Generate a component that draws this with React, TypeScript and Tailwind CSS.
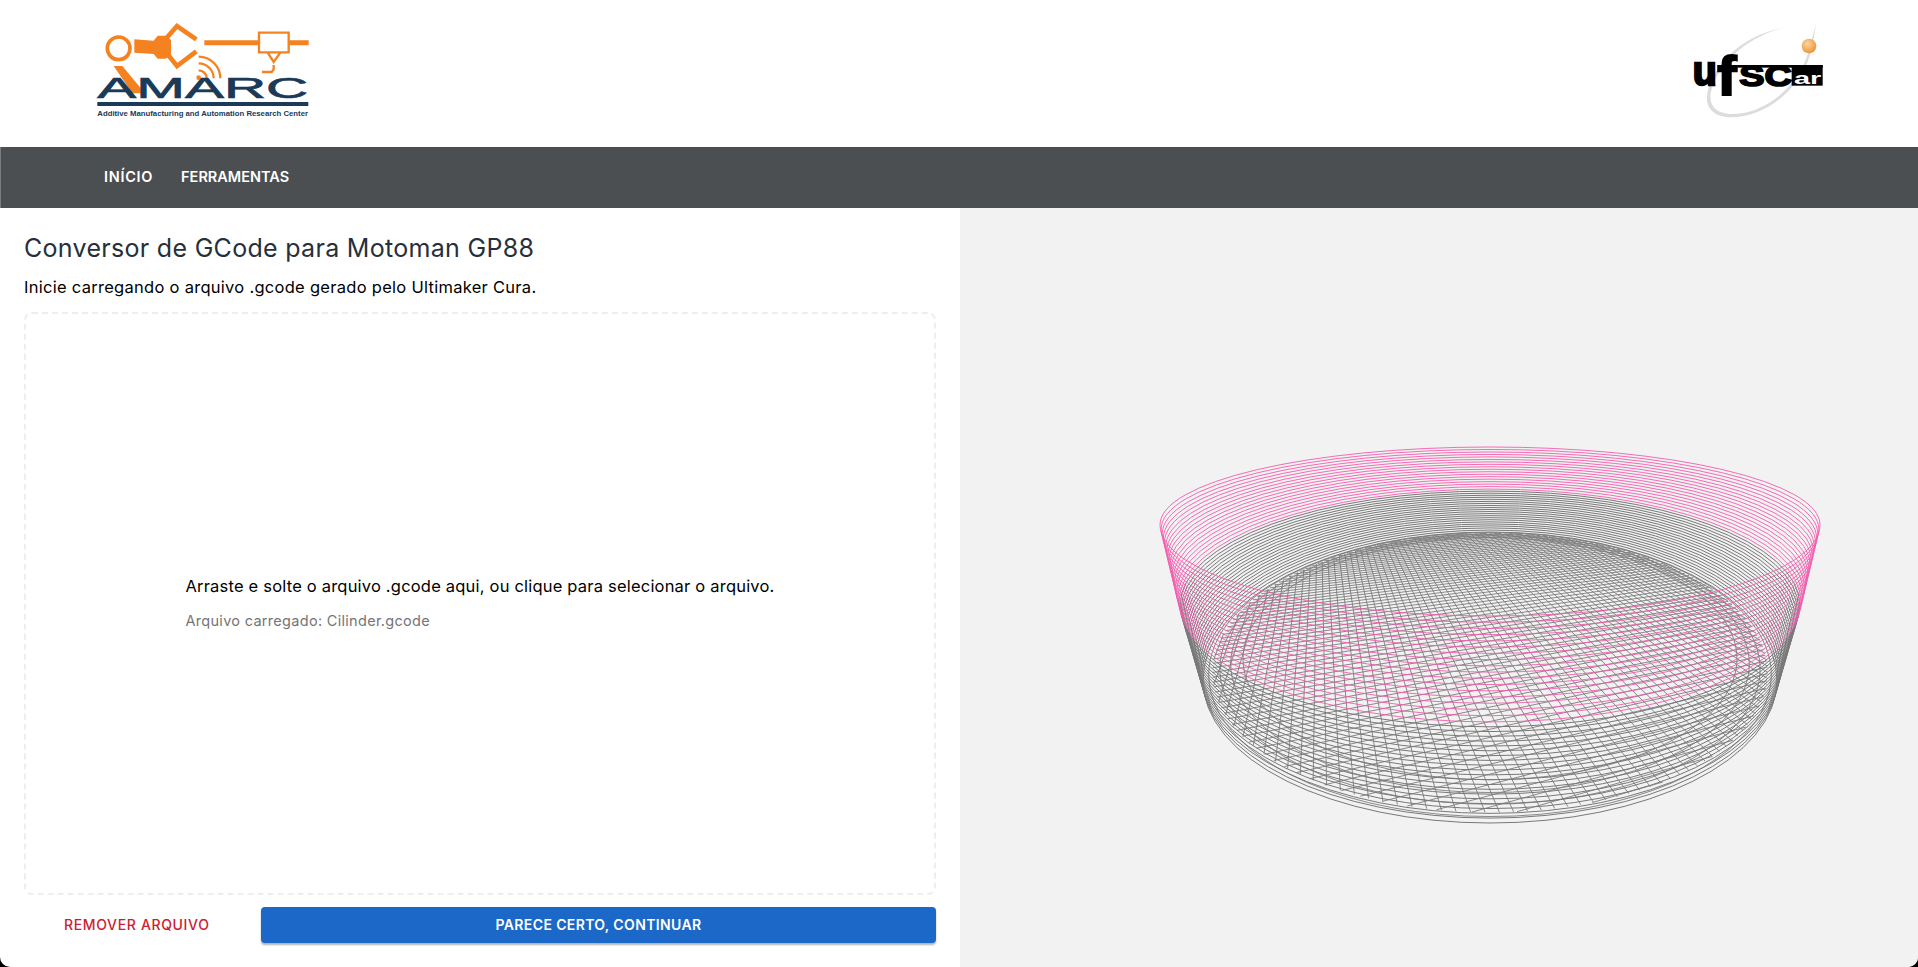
import React, { useMemo } from "react";

const CX = 1490;
const lerp = (a: number, b: number, t: number) => a + (b - a) * t;

function ring(cx: number, back: number, front: number, rx: number, frac: number) {
  const cy = back + (front - back) * frac;
  const rb = cy - back;
  const rf = front - cy;
  return `M${cx - rx} ${cy}A${rx} ${rb} 0 0 1 ${cx + rx} ${cy}A${rx} ${rf} 0 0 1 ${cx - rx} ${cy}Z`;
}

function wallLayer(i: number) {
  const split = 21;
  const last = 38;
  let back, front, rx;
  if (i <= split) {
    const t = i / split;
    back = lerp(532, 489, t);
    front = lerp(823, 722, t);
    rx = lerp(287, 311, t);
  } else {
    const t = (i - split) / (last - split);
    back = lerp(489, 447, t);
    front = lerp(722, 616, t);
    rx = lerp(311, 330, t);
  }
  return ring(CX, back, front, rx, lerp(0.51, 0.46, i / last));
}

function floorPaths() {
  const p = 0.5;
  const rx = 287;
  const back = 532;
  const front = 823;
  const ry = (front - back) / 2;
  const c = (back + front) / 2;
  const a = rx * Math.sqrt(1 - p * p);
  const b = ry * (1 - p * p);
  const y0 = c - ry * p;
  const map = (X: number, Y: number) => {
    const d = 1 - p * Y;
    return `${(CX + (a * X) / d).toFixed(1)} ${(y0 + (b * Y) / d).toFixed(1)}`;
  };
  let out = "";
  const R = 0.975;
  const step = 0.028;
  for (const deg of [71, -18]) {
    const th = (deg * Math.PI) / 180;
    const ux = Math.cos(th);
    const uy = Math.sin(th);
    for (let d = -R + step / 2; d < R; d += step) {
      const h = Math.sqrt(R * R - d * d);
      const mx = -uy * d;
      const my = ux * d;
      out += `M${map(mx - ux * h, my - uy * h)}L${map(mx + ux * h, my + uy * h)}`;
    }
  }
  for (const r of [0.985, 0.955, 0.925, 0.89]) {
    const n = 120;
    for (let k = 0; k <= n; k++) {
      const t = (k / n) * Math.PI * 2;
      out += `${k === 0 ? "M" : "L"}${map(r * Math.cos(t), r * Math.sin(t))}`;
    }
  }
  return out;
}

function Bowl() {
  const { gray, pink, floor } = useMemo(() => {
    let g = "";
    let pk = "";
    for (let i = 0; i <= 38; i++) {
      if (i < 21) g += wallLayer(i);
      else pk += wallLayer(i);
    }
    return { gray: g, pink: pk, floor: floorPaths() };
  }, []);
  return (
    <svg viewBox="960 208 958 759" className="block h-full w-full" fill="none">
      <path d={floor} stroke="#7c7c7c" strokeWidth="0.9" />
      <path d={gray} stroke="#787878" strokeWidth="1" />
      <path d={pink} stroke="#f25cae" strokeWidth="0.9" />
    </svg>
  );
}

function AmarcLogo() {
  const orange = "#f58220";
  const navy = "#1a3a58";
  return (
    <svg viewBox="110 60 640 300" className="block h-[100px] w-[213.33px] overflow-visible" fill="none">
      <circle cx="175" cy="145" r="34" stroke={orange} strokeWidth="11" />
      <path d="M160 198H186L254 280H216Z" fill={orange} />
      <path d="M222 118L280 122L292 107H318L332 120V166L316 176H292L280 162L222 158Z" fill={orange} />
      <path d="M318 115L350 78L408 118M318 158L350 198L408 154" stroke={orange} strokeWidth="14" strokeLinejoin="miter" />
      <path d="M432 128H597M683 128H745" stroke={orange} strokeWidth="15" />
      <path d="M596 98H685V157H596ZM622 158L640 186L660 158" stroke={orange} strokeWidth="7" />
      <path d="M640 195V208L634 216H605" stroke={orange} strokeWidth="7" />
      <path d="M415 211A24 24 0 0 1 439 235M415 190A45 45 0 0 1 460 235M415 170A65 65 0 0 1 480 235" stroke={orange} strokeWidth="7" />
      <circle cx="415" cy="233" r="7" fill={orange} />
      <text
        x="111"
        y="294"
        fontFamily='"Liberation Sans", sans-serif'
        fontSize="90"
        fill={navy}
        stroke={navy}
        strokeWidth="2"
        textLength="633"
        lengthAdjust="spacingAndGlyphs"
      >
        AMARC
      </text>
      <rect x="111" y="306" width="633" height="12" fill={navy} />
      <text
        x="111"
        y="347"
        fontFamily='"Liberation Sans", sans-serif'
        fontSize="24"
        fontWeight="700"
        fill={navy}
        textLength="632"
        lengthAdjust="spacingAndGlyphs"
      >
        Additive Manufacturing and Automation Research Center
      </text>
    </svg>
  );
}

function UfscarLogo() {
  return (
    <svg viewBox="90 60 400 300" className="block h-[100px] w-[133.33px] overflow-visible" fill="none">
      <path
        d="M365 85C250 105 160 190 142 280C132 340 185 365 265 345C350 322 425 250 450 165C458 135 464 100 468 72C460 100 454 125 444 160C418 245 345 315 262 337C195 352 145 335 152 280C170 195 255 115 365 85Z"
        fill="#dcdcdc"
      />
      <rect x="232" y="195" width="256" height="8" fill="#000" />
      <rect x="395" y="195" width="93" height="62" fill="#000" />
      <text x="98" y="255" fontFamily='"Liberation Sans", sans-serif' fontWeight="700" fontSize="120" fill="#000" stroke="#000" strokeWidth="7" textLength="72" lengthAdjust="spacingAndGlyphs">u</text>
      <text x="172" y="285" fontFamily='"Liberation Sans", sans-serif' fontWeight="700" fontSize="165" fill="#000" stroke="#000" strokeWidth="6" textLength="58" lengthAdjust="spacingAndGlyphs">f</text>
      <text x="238" y="258" fontFamily='"Liberation Sans", sans-serif' fontWeight="700" fontSize="90" fill="#000" stroke="#000" strokeWidth="5" textLength="158" lengthAdjust="spacingAndGlyphs">SC</text>
      <text x="402" y="253" fontFamily='"Liberation Sans", sans-serif' fontWeight="700" fontSize="52" fill="#fff" textLength="82" lengthAdjust="spacingAndGlyphs">ar</text>
      <defs>
        <radialGradient id="ball" cx="0.4" cy="0.35" r="0.7">
          <stop offset="0" stopColor="#fbd4a4" />
          <stop offset="1" stopColor="#ee9030" />
        </radialGradient>
      </defs>
      <circle cx="447" cy="138" r="22" fill="url(#ball)" />
    </svg>
  );
}

export default function App() {
  return (
    <div className="h-[967px] w-full overflow-hidden bg-black font-['Inter',sans-serif]">
      <div className="flex h-full flex-col overflow-hidden rounded-b-[10px] bg-white">
        <header className="flex h-[147px] shrink-0 items-start justify-between pl-[97px] pr-[95px] pt-5">
          <AmarcLogo />
          <UfscarLogo />
        </header>
        <nav className="flex h-[61px] shrink-0 items-center gap-7 border-l border-[#7a7d80] bg-[#4b4f52] pb-[2px] pl-[103px] text-[14.5px] font-semibold text-white">
          <span className="tracking-[0.7px]">INÍCIO</span>
          <span>FERRAMENTAS</span>
        </nav>
        <main className="flex min-h-0 flex-1">
          <section className="flex w-[960px] shrink-0 flex-col px-6 pb-6 pt-6">
            <h1 className="text-[25px] leading-8 tracking-[0.3px] text-[#26303c]">Conversor de GCode para Motoman GP88</h1>
            <p className="mt-[11px] text-[16.5px] leading-6 tracking-[0.28px] text-black">Inicie carregando o arquivo .gcode gerado pelo Ultimaker Cura.</p>
            <div className="mt-[13px] flex min-h-0 flex-1 items-center justify-center rounded-lg border-2 border-dashed border-[#eeeeee]">
              <div>
                <p className="text-[16.5px] leading-6 tracking-[0.2px] text-black">Arraste e solte o arquivo .gcode aqui, ou clique para selecionar o arquivo.</p>
                <p className="mt-[11px] text-[14.5px] leading-6 tracking-[0.3px] text-[#757575]">Arquivo carregado: Cilinder.gcode</p>
              </div>
            </div>
            <div className="mt-3 flex h-9 shrink-0 items-center">
              <button className="w-[237px] shrink-0 pl-10 text-left text-sm font-medium tracking-[0.65px] text-[#cc2030]">REMOVER ARQUIVO</button>
              <button className="h-9 flex-1 rounded bg-[#1b68c8] text-sm font-semibold tracking-[0.37px] text-white shadow-[0_2px_2px_rgba(0,0,0,0.3)]">PARECE CERTO, CONTINUAR</button>
            </div>
          </section>
          <section className="min-w-0 flex-1 bg-[#f2f2f2]">
            <Bowl />
          </section>
        </main>
      </div>
    </div>
  );
}
